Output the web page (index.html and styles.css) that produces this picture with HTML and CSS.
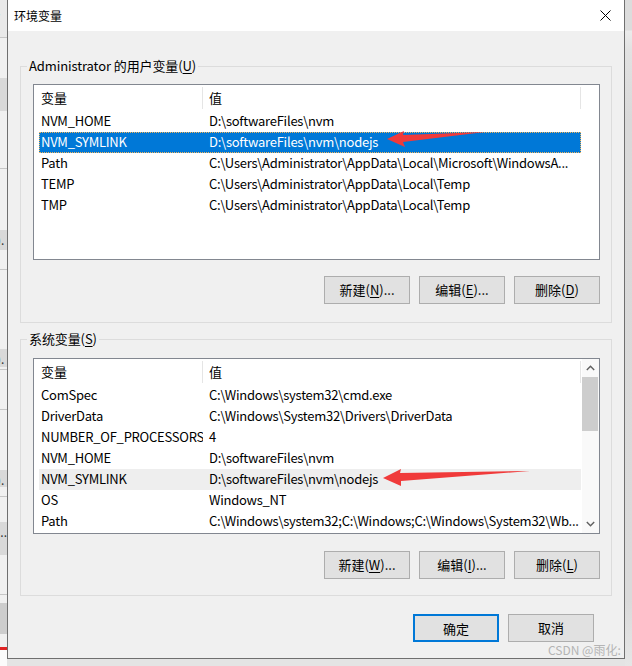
FILE: index.html
```html
<!DOCTYPE html>
<html lang="zh-CN">
<head>
<meta charset="utf-8">
<title>环境变量</title>
<link rel="stylesheet" href="styles.css">
</head>
<body>
<div class="screen">
  <div class="bg-left">
    <div class="bl-a"><span class="bl-txt">,</span></div>
    <div class="bl-line"></div>
    <div class="bl-lt h40"></div>
    <div class="bl-gr h33"></div>
    <div class="bl-lt h57"></div>
    <div class="bl-line"></div>
    <div class="bl-lt h61"></div>
    <div class="bl-gr h20"><span class="bl-txt">).</span></div>
    <div class="bl-lt h19"></div>
    <div class="bl-line"></div>
    <div class="bl-lt h79"></div>
    <div class="bl-gr h18"><span class="bl-txt">).</span></div>
    <div class="bl-lt h2"></div>
    <div class="bl-line"></div>
    <div class="bl-lt h39"></div>
    <div class="bl-line"></div>
    <div class="bl-lt h60"></div>
    <div class="bl-gr h17"><span class="bl-txt">).</span></div>
    <div class="bl-lt h9"></div>
    <div class="bl-line"></div>
    <div class="bl-lt h25"></div>
    <div class="bl-gr h33"><span class="bl-txt">...</span></div>
    <div class="bl-lt h39"></div>
    <div class="bl-line"></div>
    <div class="bl-lt h8"></div>
    <div class="bl-dk h31"></div>
    <div class="bl-lt h13"></div>
    <div class="bl-red"></div>
    <div class="bl-white"></div>
  </div>

  <div class="dialog-wrap">
    <div class="dialog">
      <div class="titlebar">
        <span class="title">环境变量</span>
        <svg class="close" width="11" height="11" viewBox="0 0 11 11"><path d="M0.5 0.5 L10.5 10.5 M10.5 0.5 L0.5 10.5" stroke="#000" stroke-width="1" fill="none"/></svg>
      </div>
      <div class="dlg-body">
        <div class="group">
          <div class="group-label">Administrator 的用户变量(<u>U</u>)</div>
          <div class="list">
            <div class="list-main">
              <div class="hdr"><div class="hc">变量</div><div class="hc hc2">值</div></div>
              <div class="row"><div class="c1">NVM_HOME</div><div class="c2">D:\softwareFiles\nvm</div></div>
              <div class="row selected"><div class="c1">NVM_SYMLINK</div><div class="c2">D:\softwareFiles\nvm\nodejs</div></div>
              <div class="row"><div class="c1">Path</div><div class="c2">C:\Users\Administrator\AppData\Local\Microsoft\WindowsA...</div></div>
              <div class="row"><div class="c1">TEMP</div><div class="c2">C:\Users\Administrator\AppData\Local\Temp</div></div>
              <div class="row"><div class="c1">TMP</div><div class="c2">C:\Users\Administrator\AppData\Local\Temp</div></div>
            </div>
          </div>
          <div class="btns">
            <button class="btn">新建(<u>N</u>)...</button>
            <button class="btn">编辑(<u>E</u>)...</button>
            <button class="btn">删除(<u>D</u>)</button>
          </div>
        </div>

        <div class="group group2">
          <div class="group-label">系统变量(<u>S</u>)</div>
          <div class="list">
            <div class="list-main">
              <div class="hdr"><div class="hc">变量</div><div class="hc hc2">值</div></div>
              <div class="row"><div class="c1">ComSpec</div><div class="c2">C:\Windows\system32\cmd.exe</div></div>
              <div class="row"><div class="c1">DriverData</div><div class="c2">C:\Windows\System32\Drivers\DriverData</div></div>
              <div class="row"><div class="c1">NUMBER_OF_PROCESSORS</div><div class="c2">4</div></div>
              <div class="row"><div class="c1">NVM_HOME</div><div class="c2">D:\softwareFiles\nvm</div></div>
              <div class="row hover"><div class="c1">NVM_SYMLINK</div><div class="c2">D:\softwareFiles\nvm\nodejs</div></div>
              <div class="row"><div class="c1">OS</div><div class="c2">Windows_NT</div></div>
              <div class="row"><div class="c1">Path</div><div class="c2">C:\Windows\system32;C:\Windows;C:\Windows\System32\Wb...</div></div>
            </div>
            <div class="scrollbar">
              <div class="sb-btn"><svg width="9" height="6" viewBox="0 0 9 6"><path d="M0.8 5 L4.5 1.2 L8.2 5" stroke="#606060" stroke-width="1.4" fill="none"/></svg></div>
              <div class="sb-track"><div class="sb-thumb"></div></div>
              <div class="sb-btn"><svg width="9" height="6" viewBox="0 0 9 6"><path d="M0.8 1 L4.5 4.8 L8.2 1" stroke="#606060" stroke-width="1.4" fill="none"/></svg></div>
            </div>
          </div>
          <div class="btns">
            <button class="btn">新建(<u>W</u>)...</button>
            <button class="btn">编辑(<u>I</u>)...</button>
            <button class="btn">删除(<u>L</u>)</button>
          </div>
        </div>

        <div class="dlg-btns">
          <button class="btn default">确定</button>
          <button class="btn">取消</button>
        </div>
      </div>
    </div>
    <div class="shadow-b"></div>
  </div>

  <div class="bg-right"></div>

  <svg class="arrows" width="632" height="666" viewBox="0 0 632 666">
    <polygon points="387,139 404,131 403,135 485,132 403,142 405,147" fill="#f03a3a"/>
    <polygon points="383,478 401,469 400,473 530,471 401,481 401,486" fill="#f03a3a"/>
  </svg>
  <div class="watermark">CSDN @雨化:</div>
</div>
</body>
</html>
```

FILE: styles.css
```css
* { box-sizing: border-box; }
html, body { margin: 0; padding: 0; }
body {
  font-family: "Noto Sans CJK SC", "Noto Sans", sans-serif;
  font-size: 13px;
  color: #000;
  background: #f0f0f0;
}
.screen {
  position: relative;
  width: 632px;
  height: 666px;
  display: flex;
  overflow: hidden;
}

/* background window on the left */
.bg-left { width: 7px; display: flex; flex-direction: column; overflow: hidden; }
.bg-left > div { flex: none; position: relative; overflow: hidden; }
.bl-a { height: 37px; background: #e9e9e9; }
.bl-line { height: 1px; background: #c6c6c6; }
.bl-lt { background: #f0f0f0; }
.bl-gr { background: #d9d9d9; }
.bl-dk { background: #cdcdcd; }
.bl-red { height: 3px; background: #e02424; }
.bl-white { flex: 1 !important; background: #fbfbfb; }
.bl-txt { font-size: 12px; line-height: 1; color: #333; display: block; margin: 4px 0 0 -3px; white-space: nowrap; }
.h2 { height: 2px; } .h8 { height: 8px; } .h9 { height: 9px; } .h13 { height: 13px; }
.h17 { height: 17px; } .h18 { height: 18px; } .h19 { height: 19px; } .h20 { height: 20px; }
.h25 { height: 25px; } .h31 { height: 31px; } .h33 { height: 33px; } .h39 { height: 39px; }
.h40 { height: 40px; } .h57 { height: 57px; } .h60 { height: 60px; } .h61 { height: 61px; } .h79 { height: 79px; }

.bg-right {
  width: 7px;
  background: linear-gradient(#dcdcdc 0, #dcdcdc 30px, #ebebeb 31px, #e2e2e2 50px, #d9d9d9 120px, #dadada 600px, #e6e6e6 666px);
}

.dialog-wrap { width: 618px; display: flex; flex-direction: column; }
.shadow-b { flex: 1; background: #e4e4e4; }

.dialog {
  height: 659px;
  border: 1px solid #6f6f6f;
  border-top: none;
  display: flex;
  flex-direction: column;
  background: #f0f0f0;
}
.titlebar {
  height: 31px;
  background: #fff;
  display: flex;
  align-items: center;
  justify-content: space-between;
  padding: 0 13px 0 6px;
}
.title { font-size: 12px; line-height: 16px; margin-top: 1px; }
.close { display: block; margin-top: 0; }

.dlg-body {
  flex: 1;
  padding: 35px 12px 0 12px;
  display: flex;
  flex-direction: column;
}

.group {
  border: 1px solid #dcdcdc;
  padding-bottom: 18px;
}
.group2 { margin-top: 16px; padding-bottom: 16px; }
.group-label {
  margin: -9px 0 0 6px;
  padding: 0 2px;
  width: max-content;
  background: #f0f0f0;
  line-height: 15px;
  height: 16px;
  letter-spacing: -0.1px;
}
u { text-decoration-thickness: 1px; text-underline-offset: 2px; }

.list {
  margin: 10px 0 0 12px;
  width: 567px;
  height: 176px;
  border: 1px solid #828790;
  background: #fff;
  display: flex;
  padding-left: 5px;
}
.group2 .list { margin-top: 11px; }
.list-main { width: 542px; flex: none; }
.hdr {
  display: grid;
  grid-template-columns: 164px 378px;
  height: 26px;
  padding: 2px 0;
}
.hc {
  height: 22px;
  line-height: 21px;
  padding-left: 2px;
  border-right: 1px solid #e5e5e5;
}
.hc2 { padding-left: 6px; }
.row {
  display: grid;
  grid-template-columns: 164px 378px;
  height: 21px;
  line-height: 19px;
  white-space: nowrap;
  letter-spacing: -0.25px;
}
.c1 { padding-left: 2px; overflow: hidden; }
.c2 { padding-left: 6px; overflow: hidden; }
.row.selected {
  background: #0078d7;
  color: #fff;
  outline: 1px dotted #f3b55a;
  outline-offset: -1px;
}
.row.hover { background: #eeeeee; }

.scrollbar {
  width: 17px;
  margin-left: 1px;
  display: flex;
  flex-direction: column;
  background: #f9f9f9;
}
.sb-btn {
  height: 18px;
  display: flex;
  align-items: center;
  justify-content: center;
  flex: none;
}
.sb-track { flex: 1; }
.sb-thumb {
  height: 54px;
  margin: 0 1px 0 0;
  background: #cdcdcd;
}

.btns {
  display: flex;
  justify-content: flex-end;
  gap: 9px;
  margin-top: 16px;
  padding-right: 11px;
}
.group2 .btns { margin-top: 17px; }
.btn {
  width: 86px;
  height: 28px;
  padding: 0;
  background: #e1e1e1;
  border: 1px solid #adadad;
  font-family: inherit;
  font-size: 13px;
  color: #000;
  line-height: 26px;
}
.btn.default { border: 2px solid #0078d7; }

.dlg-btns {
  display: flex;
  justify-content: flex-end;
  gap: 9px;
  margin-top: 18px;
  padding-right: 18px;
}

.arrows {
  position: absolute;
  left: 0;
  top: 0;
  pointer-events: none;
}
.watermark {
  position: absolute;
  left: 548px;
  top: 642px;
  font-size: 12px;
  line-height: 16px;
  color: #b4b4b4;
  letter-spacing: 0;
  white-space: nowrap;
}
```
